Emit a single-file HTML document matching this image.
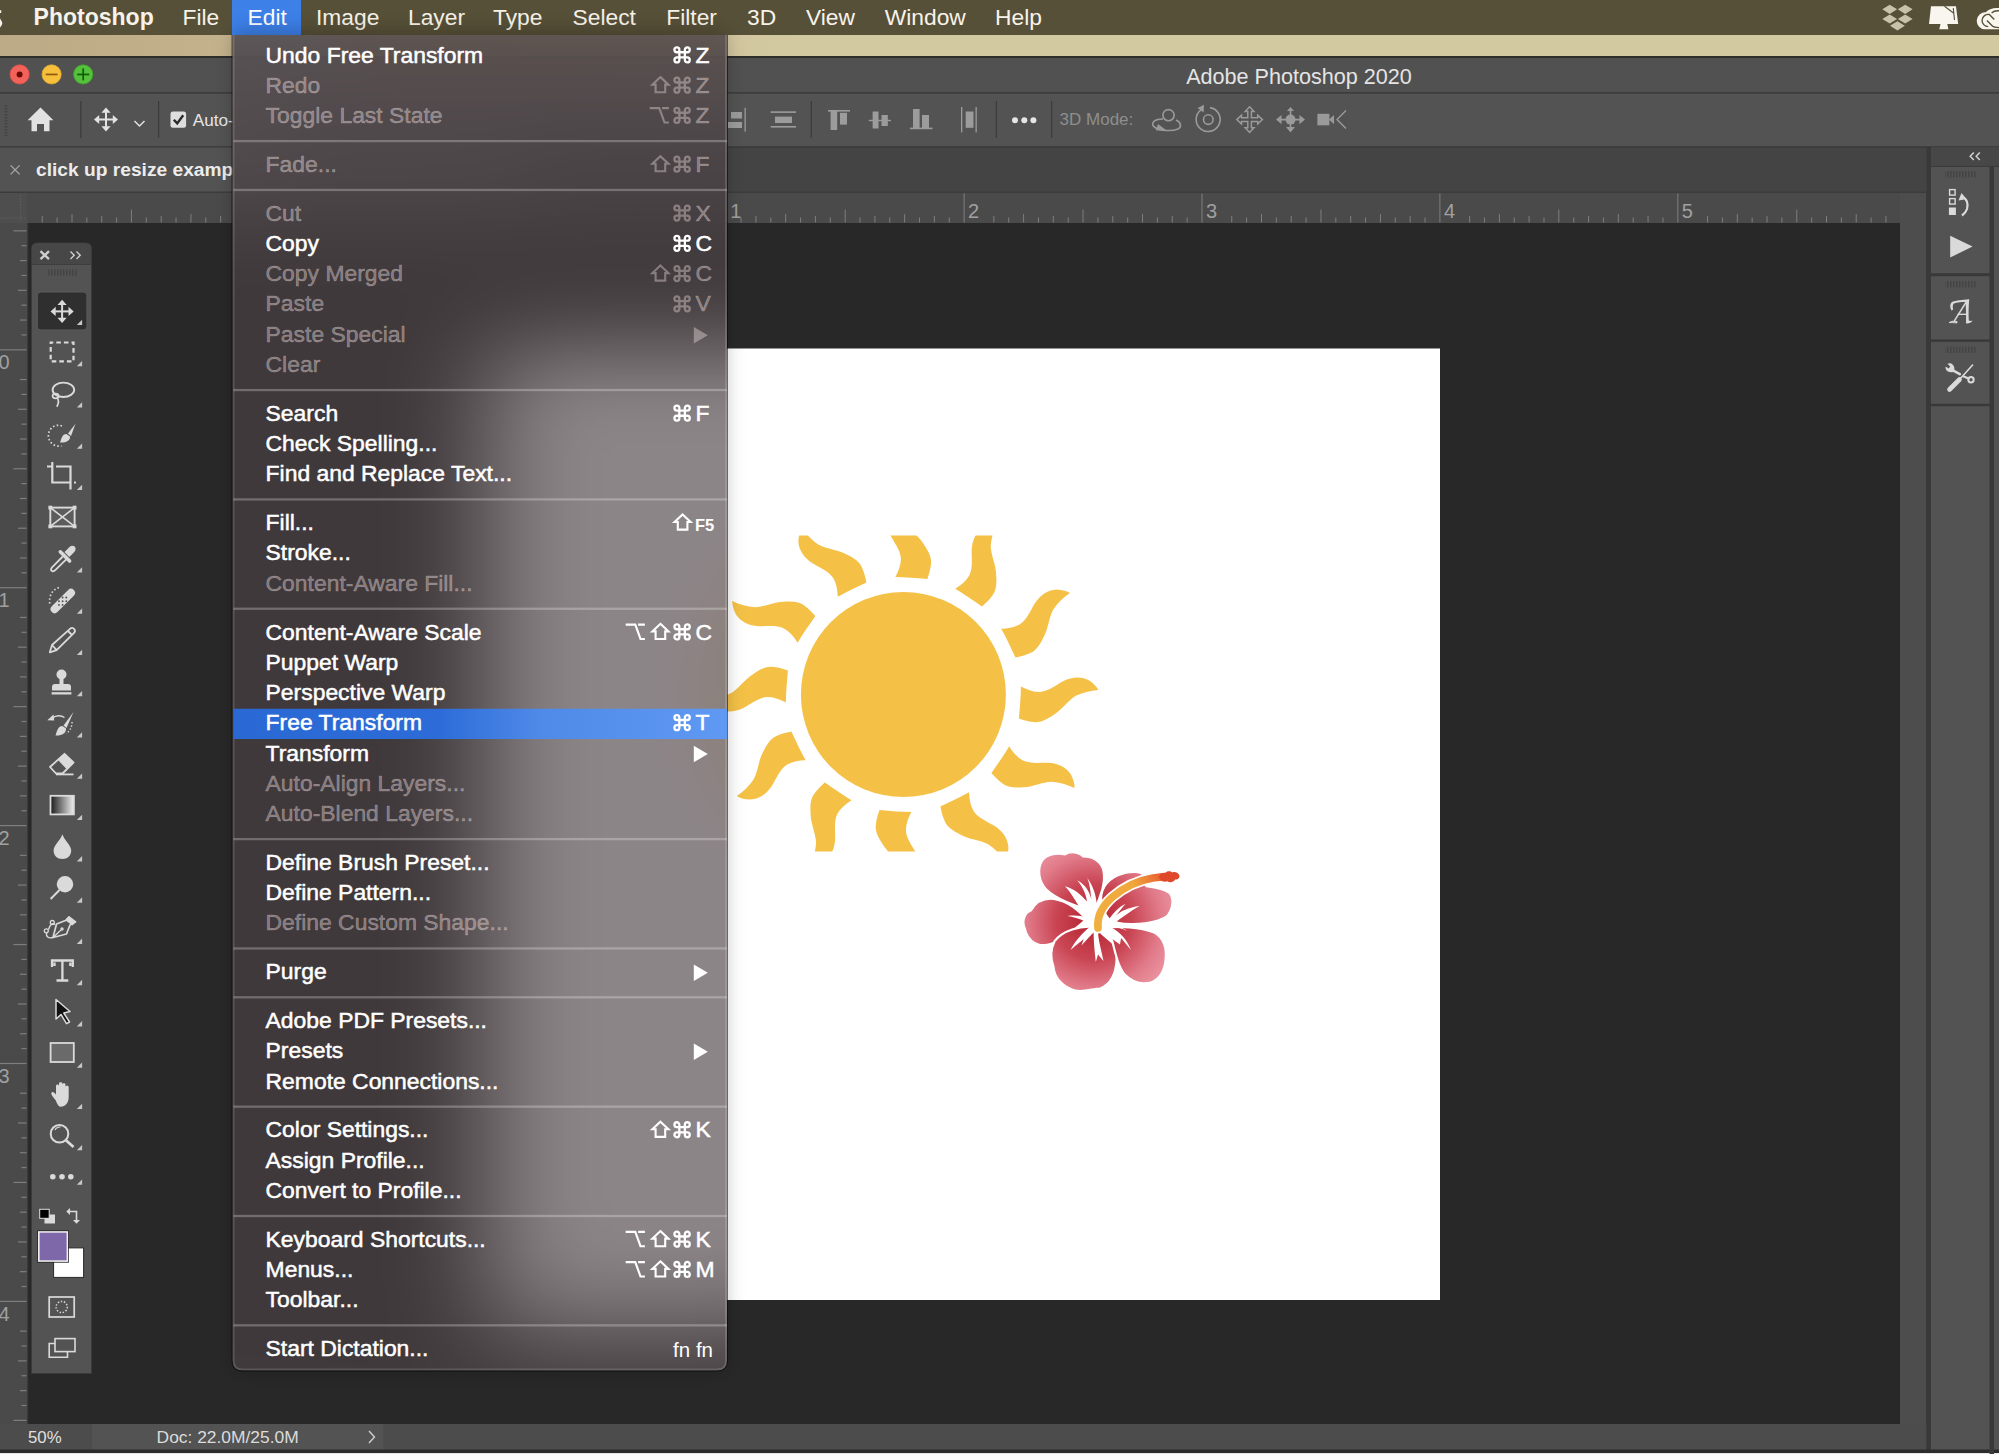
<!DOCTYPE html><html><head><meta charset="utf-8"><style>html,body{margin:0;padding:0;}body{width:1999px;height:1454px;overflow:hidden;position:relative;background:#282828;font-family:"Liberation Sans",sans-serif}svg{position:absolute;left:0;top:0}text{font-family:"Liberation Sans",sans-serif}</style></head><body>
<svg width="1999" height="1454" viewBox="0 0 1999 1454"><defs><linearGradient id="tan" gradientUnits="userSpaceOnUse" x1="0" y1="0" x2="800" y2="0"><stop offset="0" stop-color="#bca985"/><stop offset="0.35" stop-color="#c5b48e"/><stop offset="1" stop-color="#d3c9a1"/></linearGradient><pattern id="vdots" x="0" y="0" width="1" height="3" patternUnits="userSpaceOnUse"><rect x="0" y="0" width="1" height="1.5" fill="#5e5e5e"/></pattern><pattern id="hdots" x="0" y="0" width="3" height="1" patternUnits="userSpaceOnUse"><rect x="0" y="0" width="1.5" height="1" fill="#5e5e5e"/></pattern><radialGradient id="petal" gradientUnits="userSpaceOnUse" cx="760" cy="740" r="760"><stop offset="0" stop-color="#b3222f"/><stop offset="0.45" stop-color="#c94452"/><stop offset="0.8" stop-color="#e17b8a"/><stop offset="1" stop-color="#ea909e"/></radialGradient><linearGradient id="stamen" gradientUnits="userSpaceOnUse" x1="800" y1="780" x2="1540" y2="320"><stop offset="0" stop-color="#f0b040"/><stop offset="0.55" stop-color="#f0a63c"/><stop offset="0.8" stop-color="#e86a34"/><stop offset="1" stop-color="#e0432c"/></linearGradient><linearGradient id="hilite" gradientUnits="userSpaceOnUse" x1="232" y1="0" x2="727" y2="0"><stop offset="0" stop-color="#2a68d4"/><stop offset="0.42" stop-color="#2d6cd8"/><stop offset="0.62" stop-color="#4f8ae8"/><stop offset="1" stop-color="#5f99f3"/></linearGradient><pattern id="vgrip" x="0" y="0" width="3" height="3" patternUnits="userSpaceOnUse"><rect x="0" y="0" width="3" height="1.5" fill="#444"/></pattern><pattern id="hgrip" x="0" y="0" width="3" height="6.2" patternUnits="userSpaceOnUse"><rect x="0" y="0" width="1.5" height="6.2" fill="#444"/></pattern><linearGradient id="gtool" x1="0" y1="0" x2="1" y2="0"><stop offset="0" stop-color="#1a1a1a"/><stop offset="1" stop-color="#f0f0f0"/></linearGradient><filter id="mblur" filterUnits="userSpaceOnUse" x="0" y="0" width="1999" height="1454" color-interpolation-filters="sRGB"><feGaussianBlur stdDeviation="52 44" edgeMode="duplicate"/></filter><clipPath id="menuclip"><path d="M 232.5 35 H 727 V 1360.5 Q 727 1370.5 717 1370.5 H 242.5 Q 232.5 1370.5 232.5 1360.5 Z"/></clipPath></defs><g id="scene"><rect x="0" y="0" width="1999" height="1454" fill="#282828"/><rect x="0" y="0" width="1999" height="35" fill="#575038"/><rect x="0" y="35" width="1999" height="22" fill="url(#tan)"/><rect x="0" y="56" width="1999" height="2" fill="#2e2d29"/><rect x="0" y="58" width="1999" height="35" fill="#515151"/><rect x="0" y="92" width="1999" height="1.5" fill="#3d3d3d"/><rect x="0" y="93.5" width="1999" height="53" fill="#535353"/><rect x="0" y="146" width="1999" height="1.5" fill="#3f3f3f"/><rect x="0" y="147.5" width="1927" height="45" fill="#444444"/><rect x="0" y="147.5" width="260" height="45" fill="#535353"/><rect x="0" y="191.5" width="1927" height="1.5" fill="#3c3c3c"/><rect x="0" y="193" width="1900" height="30" fill="#4a4a4a"/><rect x="0" y="223" width="27" height="1201" fill="#4a4a4a"/><rect x="27" y="223" width="1.5" height="1201" fill="#3a3a3a"/><rect x="28.5" y="223" width="1871.5" height="1201" fill="#282828"/><rect x="1900" y="193" width="26.5" height="1231" fill="#4d4d4d"/><rect x="1926.5" y="147.5" width="4.5" height="1306" fill="#393939"/><rect x="1931" y="147.5" width="68" height="1306" fill="#535353"/><rect x="0" y="1424" width="1926.5" height="26" fill="#4c4c4c"/><rect x="92" y="1424" width="291" height="26" fill="#535353"/><rect x="0" y="1449.5" width="1999" height="3.5" fill="#2d2d2d"/><rect x="0" y="1453" width="1999" height="1" fill="#e8e8e8"/><rect x="489" y="348.5" width="951" height="951.5" fill="#ffffff"/><rect x="41.74" y="216.00" width="1" height="6.5" fill="#7e7e7e"/><rect x="56.61" y="217.50" width="1" height="5" fill="#7e7e7e"/><rect x="71.48" y="214.00" width="1" height="8.5" fill="#7e7e7e"/><rect x="86.34" y="217.50" width="1" height="5" fill="#7e7e7e"/><rect x="101.21" y="216.00" width="1" height="6.5" fill="#7e7e7e"/><rect x="116.08" y="217.50" width="1" height="5" fill="#7e7e7e"/><rect x="130.95" y="209.50" width="1" height="13" fill="#7e7e7e"/><rect x="145.82" y="217.50" width="1" height="5" fill="#7e7e7e"/><rect x="160.69" y="216.00" width="1" height="6.5" fill="#7e7e7e"/><rect x="175.56" y="217.50" width="1" height="5" fill="#7e7e7e"/><rect x="190.43" y="214.00" width="1" height="8.5" fill="#7e7e7e"/><rect x="205.29" y="217.50" width="1" height="5" fill="#7e7e7e"/><rect x="220.16" y="216.00" width="1" height="6.5" fill="#7e7e7e"/><rect x="235.03" y="217.50" width="1" height="5" fill="#7e7e7e"/><rect x="249.90" y="193.50" width="1" height="29" fill="#7e7e7e"/><rect x="264.77" y="217.50" width="1" height="5" fill="#7e7e7e"/><rect x="279.64" y="216.00" width="1" height="6.5" fill="#7e7e7e"/><rect x="294.51" y="217.50" width="1" height="5" fill="#7e7e7e"/><rect x="309.38" y="214.00" width="1" height="8.5" fill="#7e7e7e"/><rect x="324.24" y="217.50" width="1" height="5" fill="#7e7e7e"/><rect x="339.11" y="216.00" width="1" height="6.5" fill="#7e7e7e"/><rect x="353.98" y="217.50" width="1" height="5" fill="#7e7e7e"/><rect x="368.85" y="209.50" width="1" height="13" fill="#7e7e7e"/><rect x="383.72" y="217.50" width="1" height="5" fill="#7e7e7e"/><rect x="398.59" y="216.00" width="1" height="6.5" fill="#7e7e7e"/><rect x="413.46" y="217.50" width="1" height="5" fill="#7e7e7e"/><rect x="428.32" y="214.00" width="1" height="8.5" fill="#7e7e7e"/><rect x="443.19" y="217.50" width="1" height="5" fill="#7e7e7e"/><rect x="458.06" y="216.00" width="1" height="6.5" fill="#7e7e7e"/><rect x="472.93" y="217.50" width="1" height="5" fill="#7e7e7e"/><rect x="487.80" y="193.50" width="1" height="29" fill="#7e7e7e"/><text x="492.3" y="218.3" font-size="20" fill="#a0a0a0" font-weight="normal" text-anchor="start" >0</text><rect x="517.54" y="216.00" width="1" height="6.5" fill="#7e7e7e"/><rect x="532.41" y="217.50" width="1" height="5" fill="#7e7e7e"/><rect x="547.27" y="214.00" width="1" height="8.5" fill="#7e7e7e"/><rect x="562.14" y="217.50" width="1" height="5" fill="#7e7e7e"/><rect x="577.01" y="216.00" width="1" height="6.5" fill="#7e7e7e"/><rect x="591.88" y="217.50" width="1" height="5" fill="#7e7e7e"/><rect x="606.75" y="209.50" width="1" height="13" fill="#7e7e7e"/><rect x="621.62" y="217.50" width="1" height="5" fill="#7e7e7e"/><rect x="636.49" y="216.00" width="1" height="6.5" fill="#7e7e7e"/><rect x="651.36" y="217.50" width="1" height="5" fill="#7e7e7e"/><rect x="666.23" y="214.00" width="1" height="8.5" fill="#7e7e7e"/><rect x="681.09" y="217.50" width="1" height="5" fill="#7e7e7e"/><rect x="695.96" y="216.00" width="1" height="6.5" fill="#7e7e7e"/><rect x="710.83" y="217.50" width="1" height="5" fill="#7e7e7e"/><rect x="725.70" y="193.50" width="1" height="29" fill="#7e7e7e"/><text x="730.2" y="218.3" font-size="20" fill="#a0a0a0" font-weight="normal" text-anchor="start" >1</text><rect x="740.57" y="217.50" width="1" height="5" fill="#7e7e7e"/><rect x="755.44" y="216.00" width="1" height="6.5" fill="#7e7e7e"/><rect x="770.31" y="217.50" width="1" height="5" fill="#7e7e7e"/><rect x="785.17" y="214.00" width="1" height="8.5" fill="#7e7e7e"/><rect x="800.04" y="217.50" width="1" height="5" fill="#7e7e7e"/><rect x="814.91" y="216.00" width="1" height="6.5" fill="#7e7e7e"/><rect x="829.78" y="217.50" width="1" height="5" fill="#7e7e7e"/><rect x="844.65" y="209.50" width="1" height="13" fill="#7e7e7e"/><rect x="859.52" y="217.50" width="1" height="5" fill="#7e7e7e"/><rect x="874.39" y="216.00" width="1" height="6.5" fill="#7e7e7e"/><rect x="889.26" y="217.50" width="1" height="5" fill="#7e7e7e"/><rect x="904.12" y="214.00" width="1" height="8.5" fill="#7e7e7e"/><rect x="918.99" y="217.50" width="1" height="5" fill="#7e7e7e"/><rect x="933.86" y="216.00" width="1" height="6.5" fill="#7e7e7e"/><rect x="948.73" y="217.50" width="1" height="5" fill="#7e7e7e"/><rect x="963.60" y="193.50" width="1" height="29" fill="#7e7e7e"/><text x="968.1" y="218.3" font-size="20" fill="#a0a0a0" font-weight="normal" text-anchor="start" >2</text><rect x="993.34" y="216.00" width="1" height="6.5" fill="#7e7e7e"/><rect x="1008.21" y="217.50" width="1" height="5" fill="#7e7e7e"/><rect x="1023.08" y="214.00" width="1" height="8.5" fill="#7e7e7e"/><rect x="1037.94" y="217.50" width="1" height="5" fill="#7e7e7e"/><rect x="1052.81" y="216.00" width="1" height="6.5" fill="#7e7e7e"/><rect x="1067.68" y="217.50" width="1" height="5" fill="#7e7e7e"/><rect x="1082.55" y="209.50" width="1" height="13" fill="#7e7e7e"/><rect x="1097.42" y="217.50" width="1" height="5" fill="#7e7e7e"/><rect x="1112.29" y="216.00" width="1" height="6.5" fill="#7e7e7e"/><rect x="1127.16" y="217.50" width="1" height="5" fill="#7e7e7e"/><rect x="1142.03" y="214.00" width="1" height="8.5" fill="#7e7e7e"/><rect x="1156.89" y="217.50" width="1" height="5" fill="#7e7e7e"/><rect x="1171.76" y="216.00" width="1" height="6.5" fill="#7e7e7e"/><rect x="1186.63" y="217.50" width="1" height="5" fill="#7e7e7e"/><rect x="1201.50" y="193.50" width="1" height="29" fill="#7e7e7e"/><text x="1206.0" y="218.3" font-size="20" fill="#a0a0a0" font-weight="normal" text-anchor="start" >3</text><rect x="1231.24" y="216.00" width="1" height="6.5" fill="#7e7e7e"/><rect x="1246.11" y="217.50" width="1" height="5" fill="#7e7e7e"/><rect x="1260.98" y="214.00" width="1" height="8.5" fill="#7e7e7e"/><rect x="1275.84" y="217.50" width="1" height="5" fill="#7e7e7e"/><rect x="1290.71" y="216.00" width="1" height="6.5" fill="#7e7e7e"/><rect x="1305.58" y="217.50" width="1" height="5" fill="#7e7e7e"/><rect x="1320.45" y="209.50" width="1" height="13" fill="#7e7e7e"/><rect x="1335.32" y="217.50" width="1" height="5" fill="#7e7e7e"/><rect x="1350.19" y="216.00" width="1" height="6.5" fill="#7e7e7e"/><rect x="1365.06" y="217.50" width="1" height="5" fill="#7e7e7e"/><rect x="1379.92" y="214.00" width="1" height="8.5" fill="#7e7e7e"/><rect x="1394.79" y="217.50" width="1" height="5" fill="#7e7e7e"/><rect x="1409.66" y="216.00" width="1" height="6.5" fill="#7e7e7e"/><rect x="1424.53" y="217.50" width="1" height="5" fill="#7e7e7e"/><rect x="1439.40" y="193.50" width="1" height="29" fill="#7e7e7e"/><text x="1443.9" y="218.3" font-size="20" fill="#a0a0a0" font-weight="normal" text-anchor="start" >4</text><rect x="1469.14" y="216.00" width="1" height="6.5" fill="#7e7e7e"/><rect x="1484.01" y="217.50" width="1" height="5" fill="#7e7e7e"/><rect x="1498.88" y="214.00" width="1" height="8.5" fill="#7e7e7e"/><rect x="1513.74" y="217.50" width="1" height="5" fill="#7e7e7e"/><rect x="1528.61" y="216.00" width="1" height="6.5" fill="#7e7e7e"/><rect x="1543.48" y="217.50" width="1" height="5" fill="#7e7e7e"/><rect x="1558.35" y="209.50" width="1" height="13" fill="#7e7e7e"/><rect x="1573.22" y="217.50" width="1" height="5" fill="#7e7e7e"/><rect x="1588.09" y="216.00" width="1" height="6.5" fill="#7e7e7e"/><rect x="1602.96" y="217.50" width="1" height="5" fill="#7e7e7e"/><rect x="1617.83" y="214.00" width="1" height="8.5" fill="#7e7e7e"/><rect x="1632.69" y="217.50" width="1" height="5" fill="#7e7e7e"/><rect x="1647.56" y="216.00" width="1" height="6.5" fill="#7e7e7e"/><rect x="1662.43" y="217.50" width="1" height="5" fill="#7e7e7e"/><rect x="1677.30" y="193.50" width="1" height="29" fill="#7e7e7e"/><text x="1681.8" y="218.3" font-size="20" fill="#a0a0a0" font-weight="normal" text-anchor="start" >5</text><rect x="1707.04" y="216.00" width="1" height="6.5" fill="#7e7e7e"/><rect x="1721.91" y="217.50" width="1" height="5" fill="#7e7e7e"/><rect x="1736.78" y="214.00" width="1" height="8.5" fill="#7e7e7e"/><rect x="1751.64" y="217.50" width="1" height="5" fill="#7e7e7e"/><rect x="1766.51" y="216.00" width="1" height="6.5" fill="#7e7e7e"/><rect x="1781.38" y="217.50" width="1" height="5" fill="#7e7e7e"/><rect x="1796.25" y="209.50" width="1" height="13" fill="#7e7e7e"/><rect x="1811.12" y="217.50" width="1" height="5" fill="#7e7e7e"/><rect x="1825.99" y="216.00" width="1" height="6.5" fill="#7e7e7e"/><rect x="1840.86" y="217.50" width="1" height="5" fill="#7e7e7e"/><rect x="1855.72" y="214.00" width="1" height="8.5" fill="#7e7e7e"/><rect x="1870.59" y="217.50" width="1" height="5" fill="#7e7e7e"/><rect x="1885.46" y="216.00" width="1" height="6.5" fill="#7e7e7e"/><rect x="0" y="193" width="27" height="30" fill="#4e4e4e"/><rect x="20" y="194" width="1" height="28" fill="url(#vdots)"/><rect x="0" y="217.5" width="26" height="1" fill="url(#hdots)"/><rect x="13.50" y="230.25" width="13" height="1.2" fill="#7e7e7e"/><rect x="21.50" y="245.12" width="5" height="1.2" fill="#7e7e7e"/><rect x="20.00" y="259.99" width="6.5" height="1.2" fill="#7e7e7e"/><rect x="21.50" y="274.86" width="5" height="1.2" fill="#7e7e7e"/><rect x="18.00" y="289.72" width="8.5" height="1.2" fill="#7e7e7e"/><rect x="21.50" y="304.59" width="5" height="1.2" fill="#7e7e7e"/><rect x="20.00" y="319.46" width="6.5" height="1.2" fill="#7e7e7e"/><rect x="21.50" y="334.33" width="5" height="1.2" fill="#7e7e7e"/><rect x="-0.50" y="349.20" width="27" height="1.2" fill="#7e7e7e"/><text x="-1.5" y="369.1" font-size="20" fill="#a0a0a0" font-weight="normal" text-anchor="start" >0</text><rect x="20.00" y="378.94" width="6.5" height="1.2" fill="#7e7e7e"/><rect x="21.50" y="393.81" width="5" height="1.2" fill="#7e7e7e"/><rect x="18.00" y="408.68" width="8.5" height="1.2" fill="#7e7e7e"/><rect x="21.50" y="423.54" width="5" height="1.2" fill="#7e7e7e"/><rect x="20.00" y="438.41" width="6.5" height="1.2" fill="#7e7e7e"/><rect x="21.50" y="453.28" width="5" height="1.2" fill="#7e7e7e"/><rect x="13.50" y="468.15" width="13" height="1.2" fill="#7e7e7e"/><rect x="21.50" y="483.02" width="5" height="1.2" fill="#7e7e7e"/><rect x="20.00" y="497.89" width="6.5" height="1.2" fill="#7e7e7e"/><rect x="21.50" y="512.76" width="5" height="1.2" fill="#7e7e7e"/><rect x="18.00" y="527.62" width="8.5" height="1.2" fill="#7e7e7e"/><rect x="21.50" y="542.49" width="5" height="1.2" fill="#7e7e7e"/><rect x="20.00" y="557.36" width="6.5" height="1.2" fill="#7e7e7e"/><rect x="21.50" y="572.23" width="5" height="1.2" fill="#7e7e7e"/><rect x="-0.50" y="587.10" width="27" height="1.2" fill="#7e7e7e"/><text x="-1.5" y="607.0" font-size="20" fill="#a0a0a0" font-weight="normal" text-anchor="start" >1</text><rect x="20.00" y="616.84" width="6.5" height="1.2" fill="#7e7e7e"/><rect x="21.50" y="631.71" width="5" height="1.2" fill="#7e7e7e"/><rect x="18.00" y="646.57" width="8.5" height="1.2" fill="#7e7e7e"/><rect x="21.50" y="661.44" width="5" height="1.2" fill="#7e7e7e"/><rect x="20.00" y="676.31" width="6.5" height="1.2" fill="#7e7e7e"/><rect x="21.50" y="691.18" width="5" height="1.2" fill="#7e7e7e"/><rect x="13.50" y="706.05" width="13" height="1.2" fill="#7e7e7e"/><rect x="21.50" y="720.92" width="5" height="1.2" fill="#7e7e7e"/><rect x="20.00" y="735.79" width="6.5" height="1.2" fill="#7e7e7e"/><rect x="21.50" y="750.66" width="5" height="1.2" fill="#7e7e7e"/><rect x="18.00" y="765.52" width="8.5" height="1.2" fill="#7e7e7e"/><rect x="21.50" y="780.39" width="5" height="1.2" fill="#7e7e7e"/><rect x="20.00" y="795.26" width="6.5" height="1.2" fill="#7e7e7e"/><rect x="21.50" y="810.13" width="5" height="1.2" fill="#7e7e7e"/><rect x="-0.50" y="825.00" width="27" height="1.2" fill="#7e7e7e"/><text x="-1.5" y="844.9" font-size="20" fill="#a0a0a0" font-weight="normal" text-anchor="start" >2</text><rect x="20.00" y="854.74" width="6.5" height="1.2" fill="#7e7e7e"/><rect x="21.50" y="869.61" width="5" height="1.2" fill="#7e7e7e"/><rect x="18.00" y="884.48" width="8.5" height="1.2" fill="#7e7e7e"/><rect x="21.50" y="899.34" width="5" height="1.2" fill="#7e7e7e"/><rect x="20.00" y="914.21" width="6.5" height="1.2" fill="#7e7e7e"/><rect x="21.50" y="929.08" width="5" height="1.2" fill="#7e7e7e"/><rect x="13.50" y="943.95" width="13" height="1.2" fill="#7e7e7e"/><rect x="21.50" y="958.82" width="5" height="1.2" fill="#7e7e7e"/><rect x="20.00" y="973.69" width="6.5" height="1.2" fill="#7e7e7e"/><rect x="21.50" y="988.56" width="5" height="1.2" fill="#7e7e7e"/><rect x="18.00" y="1003.43" width="8.5" height="1.2" fill="#7e7e7e"/><rect x="21.50" y="1018.29" width="5" height="1.2" fill="#7e7e7e"/><rect x="20.00" y="1033.16" width="6.5" height="1.2" fill="#7e7e7e"/><rect x="21.50" y="1048.03" width="5" height="1.2" fill="#7e7e7e"/><rect x="-0.50" y="1062.90" width="27" height="1.2" fill="#7e7e7e"/><text x="-1.5" y="1082.8" font-size="20" fill="#a0a0a0" font-weight="normal" text-anchor="start" >3</text><rect x="20.00" y="1092.64" width="6.5" height="1.2" fill="#7e7e7e"/><rect x="21.50" y="1107.51" width="5" height="1.2" fill="#7e7e7e"/><rect x="18.00" y="1122.38" width="8.5" height="1.2" fill="#7e7e7e"/><rect x="21.50" y="1137.24" width="5" height="1.2" fill="#7e7e7e"/><rect x="20.00" y="1152.11" width="6.5" height="1.2" fill="#7e7e7e"/><rect x="21.50" y="1166.98" width="5" height="1.2" fill="#7e7e7e"/><rect x="13.50" y="1181.85" width="13" height="1.2" fill="#7e7e7e"/><rect x="21.50" y="1196.72" width="5" height="1.2" fill="#7e7e7e"/><rect x="20.00" y="1211.59" width="6.5" height="1.2" fill="#7e7e7e"/><rect x="21.50" y="1226.46" width="5" height="1.2" fill="#7e7e7e"/><rect x="18.00" y="1241.33" width="8.5" height="1.2" fill="#7e7e7e"/><rect x="21.50" y="1256.19" width="5" height="1.2" fill="#7e7e7e"/><rect x="20.00" y="1271.06" width="6.5" height="1.2" fill="#7e7e7e"/><rect x="21.50" y="1285.93" width="5" height="1.2" fill="#7e7e7e"/><rect x="-0.50" y="1300.80" width="27" height="1.2" fill="#7e7e7e"/><text x="-1.5" y="1320.7" font-size="20" fill="#a0a0a0" font-weight="normal" text-anchor="start" >4</text><rect x="20.00" y="1330.54" width="6.5" height="1.2" fill="#7e7e7e"/><rect x="21.50" y="1345.41" width="5" height="1.2" fill="#7e7e7e"/><rect x="18.00" y="1360.28" width="8.5" height="1.2" fill="#7e7e7e"/><rect x="21.50" y="1375.14" width="5" height="1.2" fill="#7e7e7e"/><rect x="20.00" y="1390.01" width="6.5" height="1.2" fill="#7e7e7e"/><rect x="21.50" y="1404.88" width="5" height="1.2" fill="#7e7e7e"/><rect x="13.50" y="1419.75" width="13" height="1.2" fill="#7e7e7e"/><clipPath id="sunclip"><rect x="600" y="535.5" width="600" height="316"/></clipPath><g clip-path="url(#sunclip)" fill="#f4c146"><circle cx="903.4" cy="694.5" r="102.5"/><path transform="translate(903.4 694.5) rotate(0)" d="M -8 -117.5 C -4.5 -124 -2.5 -130 -2.5 -136 C -3 -145 -10 -153 -13.5 -160 C -17.5 -168 -18.5 -177 -14.5 -185 C -11 -190.5 -7.5 -193.5 -4.5 -195 C -4 -187 -2 -179 1.5 -172 C 6.5 -164 16 -158 20.5 -150 C 26 -142 28.5 -136 27.5 -130 C 27 -124 25 -119 24 -115.5 C 12 -116.5 2 -117.5 -8 -117.5 Z"/><path transform="translate(903.4 694.5) rotate(30)" d="M -8 -117.5 C -4.5 -124 -2.5 -130 -2.5 -136 C -3 -145 -10 -153 -13.5 -160 C -17.5 -168 -18.5 -177 -14.5 -185 C -11 -190.5 -7.5 -193.5 -4.5 -195 C -4 -187 -2 -179 1.5 -172 C 6.5 -164 16 -158 20.5 -150 C 26 -142 28.5 -136 27.5 -130 C 27 -124 25 -119 24 -115.5 C 12 -116.5 2 -117.5 -8 -117.5 Z"/><path transform="translate(903.4 694.5) rotate(60)" d="M -8 -117.5 C -4.5 -124 -2.5 -130 -2.5 -136 C -3 -145 -10 -153 -13.5 -160 C -17.5 -168 -18.5 -177 -14.5 -185 C -11 -190.5 -7.5 -193.5 -4.5 -195 C -4 -187 -2 -179 1.5 -172 C 6.5 -164 16 -158 20.5 -150 C 26 -142 28.5 -136 27.5 -130 C 27 -124 25 -119 24 -115.5 C 12 -116.5 2 -117.5 -8 -117.5 Z"/><path transform="translate(903.4 694.5) rotate(90)" d="M -8 -117.5 C -4.5 -124 -2.5 -130 -2.5 -136 C -3 -145 -10 -153 -13.5 -160 C -17.5 -168 -18.5 -177 -14.5 -185 C -11 -190.5 -7.5 -193.5 -4.5 -195 C -4 -187 -2 -179 1.5 -172 C 6.5 -164 16 -158 20.5 -150 C 26 -142 28.5 -136 27.5 -130 C 27 -124 25 -119 24 -115.5 C 12 -116.5 2 -117.5 -8 -117.5 Z"/><path transform="translate(903.4 694.5) rotate(120)" d="M -8 -117.5 C -4.5 -124 -2.5 -130 -2.5 -136 C -3 -145 -10 -153 -13.5 -160 C -17.5 -168 -18.5 -177 -14.5 -185 C -11 -190.5 -7.5 -193.5 -4.5 -195 C -4 -187 -2 -179 1.5 -172 C 6.5 -164 16 -158 20.5 -150 C 26 -142 28.5 -136 27.5 -130 C 27 -124 25 -119 24 -115.5 C 12 -116.5 2 -117.5 -8 -117.5 Z"/><path transform="translate(903.4 694.5) rotate(150)" d="M -8 -117.5 C -4.5 -124 -2.5 -130 -2.5 -136 C -3 -145 -10 -153 -13.5 -160 C -17.5 -168 -18.5 -177 -14.5 -185 C -11 -190.5 -7.5 -193.5 -4.5 -195 C -4 -187 -2 -179 1.5 -172 C 6.5 -164 16 -158 20.5 -150 C 26 -142 28.5 -136 27.5 -130 C 27 -124 25 -119 24 -115.5 C 12 -116.5 2 -117.5 -8 -117.5 Z"/><path transform="translate(903.4 694.5) rotate(180)" d="M -8 -117.5 C -4.5 -124 -2.5 -130 -2.5 -136 C -3 -145 -10 -153 -13.5 -160 C -17.5 -168 -18.5 -177 -14.5 -185 C -11 -190.5 -7.5 -193.5 -4.5 -195 C -4 -187 -2 -179 1.5 -172 C 6.5 -164 16 -158 20.5 -150 C 26 -142 28.5 -136 27.5 -130 C 27 -124 25 -119 24 -115.5 C 12 -116.5 2 -117.5 -8 -117.5 Z"/><path transform="translate(903.4 694.5) rotate(210)" d="M -8 -117.5 C -4.5 -124 -2.5 -130 -2.5 -136 C -3 -145 -10 -153 -13.5 -160 C -17.5 -168 -18.5 -177 -14.5 -185 C -11 -190.5 -7.5 -193.5 -4.5 -195 C -4 -187 -2 -179 1.5 -172 C 6.5 -164 16 -158 20.5 -150 C 26 -142 28.5 -136 27.5 -130 C 27 -124 25 -119 24 -115.5 C 12 -116.5 2 -117.5 -8 -117.5 Z"/><path transform="translate(903.4 694.5) rotate(240)" d="M -8 -117.5 C -4.5 -124 -2.5 -130 -2.5 -136 C -3 -145 -10 -153 -13.5 -160 C -17.5 -168 -18.5 -177 -14.5 -185 C -11 -190.5 -7.5 -193.5 -4.5 -195 C -4 -187 -2 -179 1.5 -172 C 6.5 -164 16 -158 20.5 -150 C 26 -142 28.5 -136 27.5 -130 C 27 -124 25 -119 24 -115.5 C 12 -116.5 2 -117.5 -8 -117.5 Z"/><path transform="translate(903.4 694.5) rotate(270)" d="M -8 -117.5 C -4.5 -124 -2.5 -130 -2.5 -136 C -3 -145 -10 -153 -13.5 -160 C -17.5 -168 -18.5 -177 -14.5 -185 C -11 -190.5 -7.5 -193.5 -4.5 -195 C -4 -187 -2 -179 1.5 -172 C 6.5 -164 16 -158 20.5 -150 C 26 -142 28.5 -136 27.5 -130 C 27 -124 25 -119 24 -115.5 C 12 -116.5 2 -117.5 -8 -117.5 Z"/><path transform="translate(903.4 694.5) rotate(300)" d="M -8 -117.5 C -4.5 -124 -2.5 -130 -2.5 -136 C -3 -145 -10 -153 -13.5 -160 C -17.5 -168 -18.5 -177 -14.5 -185 C -11 -190.5 -7.5 -193.5 -4.5 -195 C -4 -187 -2 -179 1.5 -172 C 6.5 -164 16 -158 20.5 -150 C 26 -142 28.5 -136 27.5 -130 C 27 -124 25 -119 24 -115.5 C 12 -116.5 2 -117.5 -8 -117.5 Z"/><path transform="translate(903.4 694.5) rotate(330)" d="M -8 -117.5 C -4.5 -124 -2.5 -130 -2.5 -136 C -3 -145 -10 -153 -13.5 -160 C -17.5 -168 -18.5 -177 -14.5 -185 C -11 -190.5 -7.5 -193.5 -4.5 -195 C -4 -187 -2 -179 1.5 -172 C 6.5 -164 16 -158 20.5 -150 C 26 -142 28.5 -136 27.5 -130 C 27 -124 25 -119 24 -115.5 C 12 -116.5 2 -117.5 -8 -117.5 Z"/></g><g transform="translate(1010 840) scale(0.11)"><g fill="url(#petal)" stroke="#fff" stroke-width="20" stroke-linejoin="round"><path d="M 720 640 C 600 600 420 540 330 450 C 255 375 250 260 290 190 C 330 130 420 115 500 130 C 545 100 625 105 665 150 C 745 150 830 185 850 280 C 870 380 830 520 760 640 Z"/><path d="M 700 720 C 620 640 540 560 400 535 C 300 525 230 570 190 640 C 130 660 105 740 135 805 C 150 890 220 965 320 955 C 420 945 520 870 600 800 Z"/><path d="M 760 790 C 640 780 480 820 405 920 C 370 990 370 1080 395 1150 C 400 1250 480 1340 600 1370 C 680 1385 760 1350 820 1350 C 920 1310 965 1200 970 1080 C 975 960 930 860 800 790 Z"/><path d="M 860 800 C 1000 780 1180 790 1310 840 C 1400 890 1425 990 1415 1080 C 1410 1180 1360 1270 1280 1295 C 1200 1315 1110 1290 1040 1220 C 985 1150 960 1040 930 920 Z"/><path d="M 900 720 C 830 640 800 520 860 420 C 920 330 1030 290 1130 290 C 1180 290 1210 305 1215 325 L 1240 420 C 1320 430 1400 440 1450 480 C 1490 530 1485 620 1430 690 C 1360 745 1240 760 1120 765 C 1020 768 950 755 900 720 Z"/></g><g fill="#ffffff"><path d="M 500 420 C 580 440 650 500 700 560 C 690 470 640 400 610 365 C 680 400 720 460 740 540 C 730 440 720 380 700 340 C 760 420 790 520 790 620 C 800 700 780 760 770 790 C 700 740 600 700 520 690 C 600 680 650 690 690 700 C 620 600 560 480 500 420 Z"/><path d="M 760 760 C 690 820 600 900 550 1000 C 620 940 650 920 670 900 L 650 960 C 700 900 740 860 760 840 C 760 920 770 1020 780 1110 L 800 1040 L 850 1100 C 830 1000 800 900 800 830 C 850 880 900 920 950 960 L 930 900 L 1000 950 L 1010 890 L 1100 1000 C 1060 900 1000 840 930 800 C 990 790 1050 810 1090 850 C 1040 800 990 780 930 770 C 1000 720 1100 640 1180 600 C 1080 610 1000 650 960 690 L 1050 580 C 990 610 940 660 900 720 Z"/></g><path d="M 800 800 C 790 700 840 600 930 520 C 1020 440 1150 370 1300 345 C 1340 340 1380 335 1400 335" fill="none" stroke="#fff" stroke-width="100" stroke-linecap="round"/><path d="M 800 800 C 790 700 840 600 930 520 C 1020 440 1150 370 1300 345 C 1340 340 1380 335 1400 335" fill="none" stroke="url(#stamen)" stroke-width="70" stroke-linecap="round"/><path d="M 1360 325 C 1365 300 1395 295 1410 300 C 1425 280 1460 280 1475 295 C 1500 285 1535 300 1540 325 C 1545 350 1520 360 1500 360 C 1490 385 1450 390 1430 375 C 1405 385 1370 375 1365 355 C 1350 350 1350 335 1360 325 Z" fill="#e0482c"/></g><text x="33.6" y="25.4" font-size="23.0" fill="#f7f3ea" font-weight="bold" text-anchor="start" >Photoshop</text><text x="182.5" y="25.4" font-size="22.8" fill="#f7f3ea" font-weight="normal" text-anchor="start" >File</text><text x="316" y="25.4" font-size="22.8" fill="#f7f3ea" font-weight="normal" text-anchor="start" >Image</text><text x="408" y="25.4" font-size="22.8" fill="#f7f3ea" font-weight="normal" text-anchor="start" >Layer</text><text x="493" y="25.4" font-size="22.8" fill="#f7f3ea" font-weight="normal" text-anchor="start" >Type</text><text x="572.5" y="25.4" font-size="22.8" fill="#f7f3ea" font-weight="normal" text-anchor="start" >Select</text><text x="666.3" y="25.4" font-size="22.8" fill="#f7f3ea" font-weight="normal" text-anchor="start" >Filter</text><text x="747" y="25.4" font-size="22.8" fill="#f7f3ea" font-weight="normal" text-anchor="start" >3D</text><text x="806" y="25.4" font-size="22.8" fill="#f7f3ea" font-weight="normal" text-anchor="start" >View</text><text x="884.7" y="25.4" font-size="22.8" fill="#f7f3ea" font-weight="normal" text-anchor="start" >Window</text><text x="995" y="25.4" font-size="22.8" fill="#f7f3ea" font-weight="normal" text-anchor="start" >Help</text><rect x="232" y="0" width="69" height="35" fill="#3c80e8"/><text x="247.5" y="25.4" font-size="22.8" fill="#ffffff" font-weight="normal" text-anchor="start" >Edit</text><path d="M -6 10 L 1.3 10.3 L 1.2 13 L -6 13 Z M -6 14.5 C -1.5 14.5 0.3 16.5 0.1 18.8 C 1 20 2.3 22 2.3 23.6 C 2 25 1.2 26.5 0 27.5 L -6 27.5 Z" fill="#f7f3ea"/><path d="M 1882.3 9.3 L 1889.7 4.700000000000001 L 1897.1000000000001 9.3 L 1889.7 13.9 Z" fill="#c9c2aa"/><path d="M 1897.8 9.3 L 1905.2 4.700000000000001 L 1912.6000000000001 9.3 L 1905.2 13.9 Z" fill="#c9c2aa"/><path d="M 1882.3 19 L 1889.7 14.4 L 1897.1000000000001 19 L 1889.7 23.6 Z" fill="#c9c2aa"/><path d="M 1897.8 19 L 1905.2 14.4 L 1912.6000000000001 19 L 1905.2 23.6 Z" fill="#c9c2aa"/><path d="M 1890.0 25.8 L 1897.4 21.200000000000003 L 1904.8000000000002 25.8 L 1897.4 30.4 Z" fill="#c9c2aa"/><path d="M 1931 6.2 H 1956 L 1958.2 24 H 1929 Z" fill="#f8f6ee"/><path d="M 1940.5 24 H 1947.3 L 1948.4 29.2 H 1939.3 Z" fill="#f8f6ee"/><path d="M 1944.5 6.2 L 1953.5 13 M 1953.3 8 L 1954.5 20" stroke="#575038" stroke-width="1.1" fill="none"/><path d="M 1984.7 29.3 A 8.5 8.5 0 0 1 1985.8 12.3 C 1988 9.8 1992 8 1997 8 L 2005 8 V 29.3 Z" fill="#f8f6ee"/><path d="M 1988.2 26.6 A 6.1 6.1 0 1 1 1989.3 14.5 L 1994.3 19.5 M 1986.9 20.6 L 1992.4 26.1 C 1994 27.6 1997 27.6 2000 27.6 M 1991.6 12.9 C 1993.6 11 1997 10.5 2000 10.9" fill="none" stroke="#575038" stroke-width="1.35"/><circle cx="19.6" cy="74.4" r="9.6" fill="#f2625b" stroke="#e0504a" stroke-width="0.8"/><circle cx="19.6" cy="74.4" r="3" fill="#6a0c06"/><circle cx="51.6" cy="74.4" r="9.6" fill="#f7c03c" stroke="#e0a830" stroke-width="0.8"/><rect x="45.6" y="73.6" width="12" height="1.7" fill="#91590f"/><circle cx="83.2" cy="74.4" r="9.6" fill="#55c13c" stroke="#3da62a" stroke-width="0.8"/><rect x="77.2" y="73.6" width="12" height="1.7" fill="#0d5e05"/><rect x="82.35" y="68.4" width="1.7" height="12" fill="#0d5e05"/><text x="1299" y="83.8" font-size="21.6" fill="#e4e4e4" font-weight="normal" text-anchor="middle" >Adobe Photoshop 2020</text><rect x="4.5" y="104" width="3" height="32" fill="url(#vgrip)"/><path d="M 40.5 107.5 L 53.4 120.2 H 49.5 V 131.2 H 44 V 124 H 37 V 131.2 H 31.5 V 120.2 H 27.6 Z" fill="#e2e2e2"/><rect x="80.2" y="101" width="1.2" height="37" fill="#3b3b3b"/><rect x="105.0" y="112.2" width="2.0" height="14.6" fill="#e2e2e2"/><rect x="98.7" y="118.5" width="14.6" height="2.0" fill="#e2e2e2"/><path d="M 106 107.5 L 110.6 112.7 H 101.4 Z M 106 131.5 L 110.6 126.3 H 101.4 Z M 94.0 119.5 L 99.2 114.9 V 124.1 Z M 118.0 119.5 L 112.8 114.9 V 124.1 Z" fill="#e2e2e2"/><path d="M 134.5 121 L 139.5 126 L 144.5 121" fill="none" stroke="#e2e2e2" stroke-width="1.5"/><rect x="158" y="101" width="1.2" height="37" fill="#3b3b3b"/><rect x="170.5" y="111.6" width="15.6" height="16.2" rx="2.5" fill="#dedede"/><path d="M 173.8 119.8 L 177.2 123.4 L 183.2 115.2" fill="none" stroke="#2a2a2a" stroke-width="2.4"/><text x="192.7" y="125.5" font-size="17.2" fill="#e6e6e6" font-weight="normal" text-anchor="start" >Auto-Select:</text><g fill="#9c9c9c"><rect x="731" y="112" width="11" height="6.5"/><rect x="728" y="122" width="14" height="6"/><rect x="744.5" y="107.8" width="1.3" height="23.8"/><rect x="770.7" y="111.3" width="25.3" height="1.6"/><rect x="775" y="116.6" width="17" height="6.4"/><rect x="770.7" y="126" width="25.3" height="1.6"/><rect x="828" y="110" width="22" height="1.6"/><rect x="830.6" y="111" width="6.6" height="19"/><rect x="840" y="112.8" width="7" height="11.8"/><rect x="868.8" y="119.8" width="22.2" height="1.4"/><rect x="872.6" y="111.5" width="5.9" height="17"/><rect x="881.5" y="115" width="6.3" height="11"/><rect x="910" y="127.6" width="22.5" height="1.6"/><rect x="913" y="109" width="6.6" height="19"/><rect x="922" y="115" width="7" height="13"/><rect x="961" y="107" width="1.3" height="25.4"/><rect x="975.5" y="107" width="1.3" height="25.4"/><rect x="965.7" y="111.5" width="7.8" height="16.3"/></g><rect x="810.6999999999999" y="101" width="1.2" height="37" fill="#3b3b3b"/><rect x="995.8" y="101" width="1.2" height="37" fill="#3b3b3b"/><rect x="1051.0" y="101" width="1.2" height="37" fill="#3b3b3b"/><circle cx="1015" cy="120.2" r="3" fill="#e6e6e6"/><circle cx="1024.3" cy="120.2" r="3" fill="#e6e6e6"/><circle cx="1033.4" cy="120.2" r="3" fill="#e6e6e6"/><text x="1059.6" y="125.3" font-size="17.0" fill="#8e8e8e" font-weight="normal" text-anchor="start" >3D Mode:</text><circle cx="1168.5" cy="115.2" r="5.6" fill="none" stroke="#9a9a9a" stroke-width="1.6"/><path d="M 1163 119 C 1153 119 1150 124 1155 127.5 C 1160 131 1172 131.5 1178 129 C 1182 127 1181 122 1176 120" fill="none" stroke="#9a9a9a" stroke-width="1.6"/><path d="M 1158 124 L 1166 130 L 1156 130.5 Z" fill="#9a9a9a"/><circle cx="1208.3" cy="119.6" r="4.8" fill="none" stroke="#9a9a9a" stroke-width="1.6"/><path d="M 1201 109.8 A 12 12 0 1 0 1210 107.6" fill="none" stroke="#9a9a9a" stroke-width="1.6"/><path d="M 1197.6 108 L 1204 104.8 L 1203.6 112.6 Z" fill="#9a9a9a"/><path d="M 1249.6 106.8 L 1254 111.5 H 1251.4 V 117.8 H 1257.7 V 115.2 L 1262.4 119.6 L 1257.7 124 V 121.4 H 1251.4 V 127.7 H 1254 L 1249.6 132.4 L 1245.2 127.7 H 1247.8 V 121.4 H 1241.5 V 124 L 1236.8 119.6 L 1241.5 115.2 V 117.8 H 1247.8 V 111.5 H 1245.2 Z" fill="none" stroke="#9a9a9a" stroke-width="1.5"/><circle cx="1290.5" cy="119.6" r="5" fill="#9a9a9a"/><path d="M 1290.5 107 L 1294 111 H 1287 Z M 1290.5 132.4 L 1295 127 H 1286 Z M 1276 119.6 L 1281.5 115 V 124.2 Z M 1305 119.6 L 1299.5 115 V 124.2 Z" fill="#9a9a9a"/><path d="M 1290.5 110 V 127 M 1280 119.6 H 1301" stroke="#9a9a9a" stroke-width="1.6"/><rect x="1317.4" y="113.8" width="12" height="11.5" fill="#9a9a9a"/><path d="M 1329 119.6 L 1334 115 V 124.2 Z" fill="#9a9a9a"/><path d="M 1346 110.5 L 1337 119.6 L 1346 128.5" fill="none" stroke="#9a9a9a" stroke-width="1.4"/><path d="M 10.6 165.4 L 19.6 174.4 M 19.6 165.4 L 10.6 174.4" stroke="#a8a8a8" stroke-width="1.3"/><text x="36" y="175.8" font-size="19.2" fill="#ececec" font-weight="bold" text-anchor="start" >click up resize example.psd @ 50% (Layer 1, RGB/8)</text><text x="28" y="1442.6" font-size="16.8" fill="#e0e0e0" font-weight="normal" text-anchor="start" >50%</text><text x="156.6" y="1442.6" font-size="17.4" fill="#dcdcdc" font-weight="normal" text-anchor="start" >Doc: 22.0M/25.0M</text><path d="M 369 1431 L 374.5 1437 L 369 1443" fill="none" stroke="#d0d0d0" stroke-width="1.4"/><path d="M 31.4 1373.5 V 249 Q 31.4 243 37.4 243 H 85.6 Q 91.6 243 91.6 249 V 1373.5 Z" fill="#535353" stroke="#3a3a3a" stroke-width="1"/><path d="M 31.9 264 V 249 Q 31.9 243.5 37.4 243.5 H 85.6 Q 91.1 243.5 91.1 249 V 264 Z" fill="#474747"/><rect x="31.9" y="264" width="59.2" height="1" fill="#3e3e3e"/><path d="M 40.5 251.2 L 49 259.2 M 49 251.2 L 40.5 259.2" stroke="#cfcfcf" stroke-width="2.4"/><path d="M 70.5 251.5 L 74.2 255.2 L 70.5 258.9 M 76.5 251.5 L 80.2 255.2 L 76.5 258.9" fill="none" stroke="#cfcfcf" stroke-width="1.4"/><rect x="47" y="269.5" width="31" height="6.2" fill="url(#hgrip)"/><rect x="37.3" y="292" width="49.6" height="38" rx="3.5" fill="#2f2f2f" stroke="#5e5e5e" stroke-width="0.9"/><rect x="61.1" y="304.49999999999994" width="2.0" height="13.799999999999999" fill="#dadada"/><rect x="55.2" y="310.4" width="13.799999999999999" height="2.0" fill="#dadada"/><path d="M 62.1 299.79999999999995 L 66.7 304.99999999999994 H 57.5 Z M 62.1 323.0 L 66.7 317.8 H 57.5 Z M 50.5 311.4 L 55.7 306.79999999999995 V 316.0 Z M 73.7 311.4 L 68.5 306.79999999999995 V 316.0 Z" fill="#dadada"/><path d="M 82.1 319.7 V 325.0 H 76.8 Z" fill="#c8c8c8"/><path d="M 82.1 360.96 V 366.26 H 76.8 Z" fill="#c8c8c8"/><path d="M 82.1 402.21999999999997 V 407.52 H 76.8 Z" fill="#c8c8c8"/><path d="M 82.1 443.47999999999996 V 448.78 H 76.8 Z" fill="#c8c8c8"/><path d="M 82.1 484.73999999999995 V 490.03999999999996 H 76.8 Z" fill="#c8c8c8"/><path d="M 82.1 567.26 V 572.56 H 76.8 Z" fill="#c8c8c8"/><path d="M 82.1 608.52 V 613.8199999999999 H 76.8 Z" fill="#c8c8c8"/><path d="M 82.1 649.78 V 655.0799999999999 H 76.8 Z" fill="#c8c8c8"/><path d="M 82.1 691.04 V 696.3399999999999 H 76.8 Z" fill="#c8c8c8"/><path d="M 82.1 732.3 V 737.5999999999999 H 76.8 Z" fill="#c8c8c8"/><path d="M 82.1 773.56 V 778.8599999999999 H 76.8 Z" fill="#c8c8c8"/><path d="M 82.1 814.82 V 820.12 H 76.8 Z" fill="#c8c8c8"/><path d="M 82.1 856.08 V 861.38 H 76.8 Z" fill="#c8c8c8"/><path d="M 82.1 897.34 V 902.64 H 76.8 Z" fill="#c8c8c8"/><path d="M 82.1 938.6 V 943.9 H 76.8 Z" fill="#c8c8c8"/><path d="M 82.1 979.86 V 985.16 H 76.8 Z" fill="#c8c8c8"/><path d="M 82.1 1021.12 V 1026.42 H 76.8 Z" fill="#c8c8c8"/><path d="M 82.1 1062.3799999999999 V 1067.6799999999998 H 76.8 Z" fill="#c8c8c8"/><path d="M 82.1 1103.64 V 1108.94 H 76.8 Z" fill="#c8c8c8"/><path d="M 82.1 1144.8999999999999 V 1150.1999999999998 H 76.8 Z" fill="#c8c8c8"/><path d="M 82.1 1179.46 V 1184.76 H 76.8 Z" fill="#c8c8c8"/><rect x="50.7" y="342.5" width="22.8" height="18.8" fill="none" stroke="#dadada" stroke-width="2.2" stroke-dasharray="4.6 3" stroke-dashoffset="2"/><ellipse cx="63.4" cy="389.8" rx="10.8" ry="7.2" fill="none" stroke="#dadada" stroke-width="1.9"/><ellipse cx="55.6" cy="396" rx="3" ry="2.3" fill="none" stroke="#dadada" stroke-width="1.7"/><path d="M 57 397.5 C 59 400 59 403 56.8 406.8" fill="none" stroke="#dadada" stroke-width="1.7"/><path d="M 62 426 C 54 423 47.5 430 48.5 437 C 49.5 444 56 447 61.5 446" fill="none" stroke="#dadada" stroke-width="1.7" stroke-dasharray="1.6 2.2"/><path d="M 75.5 423.7 L 68 433.5 L 71 436 Z" fill="#dadada"/><path d="M 66.5 434 C 62 434 61.5 439 60 442.5 C 65 443 70.5 441 70 436.5 Z" fill="#dadada"/><path d="M 47 466.5 H 52.5 M 52.3 462 V 482.5 H 70.5 M 56 466.5 H 70.5 V 489.5 M 74 482.5 H 76" fill="none" stroke="#dadada" stroke-width="2.2"/><rect x="50.3" y="507.6" width="24.3" height="18.8" fill="#5c5c5c" stroke="#dadada" stroke-width="1.9"/><path d="M 50.3 507.6 L 74.6 526.4 M 74.6 507.6 L 50.3 526.4" stroke="#dadada" stroke-width="1.6"/><rect x="48.4" y="505.70000000000005" width="3.8" height="3.8" fill="#dadada"/><rect x="72.69999999999999" y="505.70000000000005" width="3.8" height="3.8" fill="#dadada"/><rect x="48.4" y="524.5" width="3.8" height="3.8" fill="#dadada"/><rect x="72.69999999999999" y="524.5" width="3.8" height="3.8" fill="#dadada"/><path d="M 62.8 556.5 L 52.5 566.8 C 50.6 568.7 50.8 570.2 51.6 570.8 C 52.4 571.5 54 571.5 55.8 569.7 L 66.2 559.3" fill="none" stroke="#dadada" stroke-width="1.8" stroke-linejoin="round"/><path d="M 64.5 552 L 69.5 547 C 71.2 545.3 73.4 545.3 74.7 546.6 C 76 548 76 550.2 74.3 551.9 L 69.3 556.9 Z" fill="#dadada"/><path d="M 60.3 551.8 L 69.6 561.1" stroke="#dadada" stroke-width="3.6" stroke-linecap="round"/><path d="M 54.6 609.2 L 71 592.8" stroke="#dadada" stroke-width="8" stroke-linecap="round"/><circle cx="62.60" cy="601.20" r="0.95" fill="#535353"/><circle cx="62.60" cy="604.88" r="0.95" fill="#535353"/><circle cx="62.60" cy="597.52" r="0.95" fill="#535353"/><circle cx="66.28" cy="601.20" r="0.95" fill="#535353"/><circle cx="58.92" cy="601.20" r="0.95" fill="#535353"/><circle cx="58.92" cy="604.88" r="0.95" fill="#535353"/><circle cx="66.28" cy="604.88" r="0.95" fill="#535353"/><circle cx="66.28" cy="597.52" r="0.95" fill="#535353"/><circle cx="58.92" cy="597.52" r="0.95" fill="#535353"/><path d="M 56.3 597.5 L 66.3 607.5 M 59 594.8 L 69 604.8" stroke="#535353" stroke-width="0" /><path d="M 49.8 603.5 C 48.6 596 52.5 588.5 60.5 587.2" fill="none" stroke="#dadada" stroke-width="1.7" stroke-dasharray="1.5 2.2"/><path d="M 49.8 652.3 L 52 645 L 70 628.8 C 71.5 627.5 73 627.6 74.2 629 C 75.3 630.3 75.2 631.8 73.8 633.2 L 56.6 650.2 Z M 52 645 L 56.6 650.2 M 68 631 L 72 635" fill="none" stroke="#dadada" stroke-width="1.8" stroke-linejoin="round"/><circle cx="61.5" cy="674.5" r="5" fill="#dadada"/><rect x="59.5" y="677" width="4" height="7" fill="#dadada"/><path d="M 52 690.5 V 687 Q 52 684 55 684 H 68 Q 71 684 71 687 V 690.5 Z" fill="#dadada"/><rect x="51.6" y="692.2" width="19.8" height="2.3" fill="#dadada"/><path d="M 73.5 712 L 63.5 725.5 L 66.5 728 Z" fill="#dadada"/><path d="M 62.5 726 C 58 726 57 731 55.5 735.5 C 61 736 66.5 733.5 66 728.5 Z" fill="#dadada"/><path d="M 72 722 C 72 727 70 731 66 733.5" fill="none" stroke="#dadada" stroke-width="1.5" stroke-dasharray="1.3 2"/><path d="M 47.3 720.2 L 53.5 714.5 L 54.2 720.6 Z" fill="#dadada"/><path d="M 52.5 718 C 56 715 61 715 64.5 717.5" fill="none" stroke="#dadada" stroke-width="1.5"/><path d="M 50 767 L 64.5 753.8 L 73.5 762.5 L 62.5 773.5 H 56 Z" fill="none" stroke="#dadada" stroke-width="1.8" stroke-linejoin="round"/><path d="M 57.5 759.5 L 64.5 753.8 L 73.5 762.5 L 66.5 769 Z" fill="#dadada"/><rect x="56" y="773.5" width="17.5" height="1.8" fill="#dadada"/><rect x="50.5" y="795.8" width="23.4" height="18.6" fill="url(#gtool)" stroke="#dadada" stroke-width="1.8"/><path d="M 62.4 834.3 C 64 840 71.2 845 71.2 850.5 C 71.2 855.5 67.5 859 62.4 859 C 57.3 859 53.6 855.5 53.6 850.5 C 53.6 845 60.8 840 62.4 834.3 Z" fill="#dadada"/><circle cx="65" cy="884.3" r="8.2" fill="#dadada"/><path d="M 59.5 890 L 50.6 899" stroke="#dadada" stroke-width="2"/><path d="M 75.5 922 L 69 916.8 L 65.5 920.5 L 56.5 924 L 53 937.5 L 66.5 934 L 70 925 Z" fill="none" stroke="#dadada" stroke-width="1.7" stroke-linejoin="round"/><path d="M 69 916.8 L 75.5 922 L 72.5 925.5 L 65.5 920.5 Z" fill="#dadada"/><circle cx="62" cy="929" r="1.7" fill="#dadada"/><path d="M 53.5 937 L 61 930" stroke="#dadada" stroke-width="1.3"/><path d="M 53 937.5 C 48 939 46 936 46.5 933 M 48.5 929.5 C 50 925 52 922.5 55 924.5" fill="none" stroke="#dadada" stroke-width="1.4"/><circle cx="46.3" cy="930.8" r="2" fill="none" stroke="#dadada" stroke-width="1.3"/><circle cx="52.3" cy="922.5" r="2" fill="none" stroke="#dadada" stroke-width="1.3"/><path d="M 52 967 V 960.5 H 72.8 V 967 M 54.5 962.5 V 966 M 70.3 962.5 V 966 M 62.4 960.5 V 980.5 M 56.5 980.5 H 68.3" fill="none" stroke="#dadada" stroke-width="2.3"/><path d="M 56 999.5 L 70 1011.5 L 63.8 1013 L 69.5 1022 L 66.5 1023.6 L 61 1014.5 L 56 1019 Z" fill="#111" stroke="#dadada" stroke-width="1.5" stroke-linejoin="round"/><rect x="50.6" y="1043" width="23.2" height="19" fill="#6a6a6a" stroke="#dadada" stroke-width="1.8"/><path d="M 55.5 1100 C 53 1097 50.5 1094 51.5 1092.5 C 52.5 1091 54.5 1092.5 56 1094.5 V 1086 C 56 1084 59 1084 59 1086 V 1092 V 1083.5 C 59 1081.8 62.3 1081.8 62.3 1083.5 V 1092 V 1084.5 C 62.3 1082.8 65.5 1082.8 65.5 1084.5 V 1092.5 V 1087 C 65.5 1085.3 68.7 1085.3 68.7 1087 V 1097 C 68.7 1103 65 1107 60.5 1106.8 C 58 1106.5 56.5 1102 55.5 1100 Z" fill="#dadada"/><circle cx="59.5" cy="1133.7" r="8.8" fill="none" stroke="#dadada" stroke-width="2"/><path d="M 65.6 1140 L 73.5 1147" stroke="#dadada" stroke-width="2.8"/><path d="M 55 1130 C 56 1128 58 1127 60.5 1127" fill="none" stroke="#dadada" stroke-width="1.2"/><circle cx="52.8" cy="1176.7" r="2.8" fill="#dadada"/><circle cx="62" cy="1176.7" r="2.8" fill="#dadada"/><circle cx="70.8" cy="1176.7" r="2.8" fill="#dadada"/><rect x="44.5" y="1214.5" width="10.5" height="9" fill="#dadada"/><rect x="39.7" y="1209.3" width="9.5" height="9" fill="#000" stroke="#e0e0e0" stroke-width="1"/><path d="M 68 1211.5 H 76.5 V 1221" fill="none" stroke="#dadada" stroke-width="1.6"/><path d="M 66.3 1211.5 L 70 1208 V 1215 Z M 76.5 1223.7 L 73 1220 H 80 Z" fill="#dadada"/><rect x="53.6" y="1247.9" width="30" height="29.5" fill="#ffffff" stroke="#2a2a2a" stroke-width="1"/><rect x="38.8" y="1231.9" width="28.6" height="29.2" fill="#7f68a9" stroke="#f0f0f0" stroke-width="1.6"/><rect x="37.6" y="1230.7" width="31" height="31.6" fill="none" stroke="#2a2a2a" stroke-width="0.8"/><rect x="49.2" y="1297" width="25" height="20" fill="none" stroke="#dadada" stroke-width="1.7"/><circle cx="61.7" cy="1307" r="5.6" fill="none" stroke="#dadada" stroke-width="1.5" stroke-dasharray="1.4 1.7"/><rect x="55" y="1338.6" width="20" height="13" fill="#535353" stroke="#dadada" stroke-width="1.6"/><path d="M 55 1343.5 H 49.2 V 1357.2 H 67.5 V 1351.6" fill="none" stroke="#dadada" stroke-width="1.6"/><rect x="1931" y="147.5" width="68" height="19" fill="#474747"/><path d="M 1973.8 152.5 L 1970.2 156.3 L 1973.8 160 M 1979.8 152.5 L 1976.2 156.3 L 1979.8 160" fill="none" stroke="#d0d0d0" stroke-width="1.5"/><rect x="1931" y="166" width="68" height="1" fill="#3a3a3a"/><rect x="1989.5" y="166" width="4.5" height="1288" fill="#393939"/><rect x="1931" y="273.2" width="59" height="3" fill="#393939"/><rect x="1931" y="339.4" width="59" height="2.4" fill="#393939"/><rect x="1931" y="403.8" width="59" height="2.4" fill="#393939"/><rect x="1945" y="171" width="31.5" height="6.5" fill="url(#hgrip)"/><rect x="1945" y="281" width="31.5" height="6.5" fill="url(#hgrip)"/><rect x="1945" y="346.5" width="31.5" height="6.5" fill="url(#hgrip)"/><rect x="1949.6" y="189.6" width="5.5" height="5.5" fill="none" stroke="#dadada" stroke-width="1.4"/><rect x="1949.6" y="198.6" width="5.5" height="5.5" fill="none" stroke="#dadada" stroke-width="1.4"/><rect x="1948.9" y="207.5" width="7" height="7.5" fill="#dadada"/><path d="M 1962 197.5 C 1967 198 1968.5 204 1967 209 C 1966 212 1964 214 1962 215.5" fill="none" stroke="#dadada" stroke-width="2.2"/><path d="M 1958.5 200.5 L 1961.5 193 L 1966.5 199 Z" fill="#dadada"/><path d="M 1950.2 235.8 L 1972.6 246.6 L 1950.2 257.5 Z" fill="#dadada"/><path d="M 1951.5 310.5 C 1949.5 307 1950 303 1952.5 301.8 C 1956 300.2 1962 300.2 1969.2 299.2 L 1968.5 301.5 C 1962 302 1956.5 302.5 1953.8 303.5 C 1952.5 305 1952.6 307.5 1953.2 309.5 Z" fill="#dadada"/><path d="M 1965.5 300.8 L 1969.2 299.4 C 1968.6 306 1968.4 314 1968.8 320.6 C 1970 321.2 1971.5 321 1972.6 320.5 C 1971.5 322.5 1969 323.6 1966 323.4 C 1966.2 316 1966 308 1965.5 300.8 Z" fill="#dadada"/><path d="M 1966.5 301.5 L 1954.2 321.2" stroke="#dadada" stroke-width="1.5"/><path d="M 1949 322.6 C 1951.5 320.8 1954.5 321 1957.2 321.6 L 1956.8 323 C 1954 322.5 1951.5 322.6 1949 322.6 Z" fill="#dadada" stroke="#dadada" stroke-width="0.8"/><path d="M 1957.6 314.3 H 1967.2" stroke="#dadada" stroke-width="1.4"/><path d="M 1972.6 365 L 1960 379" stroke="#dadada" stroke-width="1.6" stroke-linecap="round"/><path d="M 1959.5 379.5 L 1949.5 389.5" stroke="#dadada" stroke-width="4.6" stroke-linecap="round"/><path d="M 1951.5 369.6 L 1959.8 374.2" stroke="#dadada" stroke-width="2.6" stroke-linecap="round"/><path d="M 1947.5 363.8 L 1950.2 366.4 L 1948.6 368.4 L 1945.6 366.6 C 1945 370 1948 373 1952.5 372.2 C 1955 371.2 1955 367 1952.8 364.8 C 1951 363 1949 363 1947.5 363.8 Z" fill="#dadada"/><path d="M 1963.8 376.4 L 1968.6 378.6" stroke="#dadada" stroke-width="2.2" stroke-linecap="round"/><circle cx="1971" cy="379.8" r="2.7" fill="none" stroke="#dadada" stroke-width="2"/></g><defs><g id="bd"><use href="#scene"/><rect x="489" y="1298" width="300" height="50" fill="#fff" fill-opacity="0.6"/></g><filter id="mshadow" filterUnits="userSpaceOnUse" x="0" y="0" width="1999" height="1454"><feGaussianBlur stdDeviation="9"/></filter></defs><rect x="232.5" y="30" width="494.5" height="1342.5" rx="10" fill="#000" fill-opacity="0.22" filter="url(#mshadow)"/><g clip-path="url(#menuclip)"><use href="#bd" filter="url(#mblur)"/><rect x="0" y="0" width="1999" height="1454" fill="rgb(78,67,71)" fill-opacity="0.647"/></g><path d="M 233.5 35 V 1360.5 Q 233.5 1369.5 242.5 1369.5 H 717 Q 726 1369.5 726 1360.5 V 35" fill="none" stroke="rgba(255,255,255,0.14)" stroke-width="2"/><path d="M 232.0 35 V 1360.5 Q 232.0 1371.0 242.5 1371.0 H 717 Q 727.5 1371.0 727.5 1360.5 V 35" fill="none" stroke="rgba(0,0,0,0.55)" stroke-width="1"/><text x="265.6" y="62.5" font-size="22.9" fill="#ffffff" font-weight="normal" text-anchor="start" stroke="#ffffff" stroke-width="0.5">Undo Free Transform</text><path d="M 679.35 52.25 V 49.80 A 2.45 2.45 0 1 0 676.90 52.25 H 687.30 A 2.45 2.45 0 1 0 684.85 49.80 V 59.90 A 2.45 2.45 0 1 0 687.30 57.45 H 676.90 A 2.45 2.45 0 1 0 679.35 59.90 Z" fill="none" stroke="#ffffff" stroke-width="2.3" stroke-linejoin="round"/><text x="695.5" y="62.5" font-size="22.9" fill="#ffffff" font-weight="normal" text-anchor="start" stroke="#ffffff" stroke-width="0.5">Z</text><text x="265.6" y="92.75" font-size="22.9" fill="rgba(255,238,238,0.36)" font-weight="normal" text-anchor="start" stroke="rgba(255,238,238,0.36)" stroke-width="0.5">Redo</text><path d="M 679.35 82.50 V 80.05 A 2.45 2.45 0 1 0 676.90 82.50 H 687.30 A 2.45 2.45 0 1 0 684.85 80.05 V 90.15 A 2.45 2.45 0 1 0 687.30 87.70 H 676.90 A 2.45 2.45 0 1 0 679.35 90.15 Z" fill="none" stroke="rgba(255,238,238,0.36)" stroke-width="2.3" stroke-linejoin="round"/><path d="M 660.40 77.10 L 668.45 84.65 H 665.20 V 92.20 H 655.60 V 84.65 H 652.35 Z" fill="none" stroke="rgba(255,238,238,0.36)" stroke-width="2.1" stroke-linejoin="miter" stroke-miterlimit="3"/><text x="695.5" y="92.75" font-size="22.9" fill="rgba(255,238,238,0.36)" font-weight="normal" text-anchor="start" stroke="rgba(255,238,238,0.36)" stroke-width="0.5">Z</text><text x="265.6" y="123.0" font-size="22.9" fill="rgba(255,238,238,0.36)" font-weight="normal" text-anchor="start" stroke="rgba(255,238,238,0.36)" stroke-width="0.5">Toggle Last State</text><path d="M 679.35 112.75 V 110.30 A 2.45 2.45 0 1 0 676.90 112.75 H 687.30 A 2.45 2.45 0 1 0 684.85 110.30 V 120.40 A 2.45 2.45 0 1 0 687.30 117.95 H 676.90 A 2.45 2.45 0 1 0 679.35 120.40 Z" fill="none" stroke="rgba(255,238,238,0.36)" stroke-width="2.3" stroke-linejoin="round"/><path d="M 649.70 108.15 H 659.30 L 664.50 122.45 H 668.90 M 662.10 108.15 H 668.90" fill="none" stroke="rgba(255,238,238,0.36)" stroke-width="2.1"/><text x="695.5" y="123.0" font-size="22.9" fill="rgba(255,238,238,0.36)" font-weight="normal" text-anchor="start" stroke="rgba(255,238,238,0.36)" stroke-width="0.5">Z</text><rect x="233.5" y="139.95" width="493.5" height="2.3" fill="rgba(255,255,255,0.26)"/><text x="265.6" y="171.85" font-size="22.9" fill="rgba(255,238,238,0.36)" font-weight="normal" text-anchor="start" stroke="rgba(255,238,238,0.36)" stroke-width="0.5">Fade...</text><path d="M 679.35 161.60 V 159.15 A 2.45 2.45 0 1 0 676.90 161.60 H 687.30 A 2.45 2.45 0 1 0 684.85 159.15 V 169.25 A 2.45 2.45 0 1 0 687.30 166.80 H 676.90 A 2.45 2.45 0 1 0 679.35 169.25 Z" fill="none" stroke="rgba(255,238,238,0.36)" stroke-width="2.3" stroke-linejoin="round"/><path d="M 660.40 156.20 L 668.45 163.75 H 665.20 V 171.30 H 655.60 V 163.75 H 652.35 Z" fill="none" stroke="rgba(255,238,238,0.36)" stroke-width="2.1" stroke-linejoin="miter" stroke-miterlimit="3"/><text x="695.5" y="171.85" font-size="22.9" fill="rgba(255,238,238,0.36)" font-weight="normal" text-anchor="start" stroke="rgba(255,238,238,0.36)" stroke-width="0.5">F</text><rect x="233.5" y="188.80" width="493.5" height="2.3" fill="rgba(255,255,255,0.26)"/><text x="265.6" y="220.7" font-size="22.9" fill="rgba(255,238,238,0.36)" font-weight="normal" text-anchor="start" stroke="rgba(255,238,238,0.36)" stroke-width="0.5">Cut</text><path d="M 679.35 210.45 V 208.00 A 2.45 2.45 0 1 0 676.90 210.45 H 687.30 A 2.45 2.45 0 1 0 684.85 208.00 V 218.10 A 2.45 2.45 0 1 0 687.30 215.65 H 676.90 A 2.45 2.45 0 1 0 679.35 218.10 Z" fill="none" stroke="rgba(255,238,238,0.36)" stroke-width="2.3" stroke-linejoin="round"/><text x="695.5" y="220.7" font-size="22.9" fill="rgba(255,238,238,0.36)" font-weight="normal" text-anchor="start" stroke="rgba(255,238,238,0.36)" stroke-width="0.5">X</text><text x="265.6" y="250.95" font-size="22.9" fill="#ffffff" font-weight="normal" text-anchor="start" stroke="#ffffff" stroke-width="0.5">Copy</text><path d="M 679.35 240.70 V 238.25 A 2.45 2.45 0 1 0 676.90 240.70 H 687.30 A 2.45 2.45 0 1 0 684.85 238.25 V 248.35 A 2.45 2.45 0 1 0 687.30 245.90 H 676.90 A 2.45 2.45 0 1 0 679.35 248.35 Z" fill="none" stroke="#ffffff" stroke-width="2.3" stroke-linejoin="round"/><text x="695.5" y="250.95" font-size="22.9" fill="#ffffff" font-weight="normal" text-anchor="start" stroke="#ffffff" stroke-width="0.5">C</text><text x="265.6" y="281.2" font-size="22.9" fill="rgba(255,238,238,0.36)" font-weight="normal" text-anchor="start" stroke="rgba(255,238,238,0.36)" stroke-width="0.5">Copy Merged</text><path d="M 679.35 270.95 V 268.50 A 2.45 2.45 0 1 0 676.90 270.95 H 687.30 A 2.45 2.45 0 1 0 684.85 268.50 V 278.60 A 2.45 2.45 0 1 0 687.30 276.15 H 676.90 A 2.45 2.45 0 1 0 679.35 278.60 Z" fill="none" stroke="rgba(255,238,238,0.36)" stroke-width="2.3" stroke-linejoin="round"/><path d="M 660.40 265.55 L 668.45 273.10 H 665.20 V 280.65 H 655.60 V 273.10 H 652.35 Z" fill="none" stroke="rgba(255,238,238,0.36)" stroke-width="2.1" stroke-linejoin="miter" stroke-miterlimit="3"/><text x="695.5" y="281.2" font-size="22.9" fill="rgba(255,238,238,0.36)" font-weight="normal" text-anchor="start" stroke="rgba(255,238,238,0.36)" stroke-width="0.5">C</text><text x="265.6" y="311.45" font-size="22.9" fill="rgba(255,238,238,0.36)" font-weight="normal" text-anchor="start" stroke="rgba(255,238,238,0.36)" stroke-width="0.5">Paste</text><path d="M 679.35 301.20 V 298.75 A 2.45 2.45 0 1 0 676.90 301.20 H 687.30 A 2.45 2.45 0 1 0 684.85 298.75 V 308.85 A 2.45 2.45 0 1 0 687.30 306.40 H 676.90 A 2.45 2.45 0 1 0 679.35 308.85 Z" fill="none" stroke="rgba(255,238,238,0.36)" stroke-width="2.3" stroke-linejoin="round"/><text x="695.5" y="311.45" font-size="22.9" fill="rgba(255,238,238,0.36)" font-weight="normal" text-anchor="start" stroke="rgba(255,238,238,0.36)" stroke-width="0.5">V</text><text x="265.6" y="341.7" font-size="22.9" fill="rgba(255,238,238,0.36)" font-weight="normal" text-anchor="start" stroke="rgba(255,238,238,0.36)" stroke-width="0.5">Paste Special</text><path d="M 693.8 326.90 L 707.8 335.20 L 693.8 343.50 Z" fill="rgba(255,238,238,0.36)"/><text x="265.6" y="371.95" font-size="22.9" fill="rgba(255,238,238,0.36)" font-weight="normal" text-anchor="start" stroke="rgba(255,238,238,0.36)" stroke-width="0.5">Clear</text><rect x="233.5" y="388.90" width="493.5" height="2.3" fill="rgba(255,255,255,0.26)"/><text x="265.6" y="420.8" font-size="22.9" fill="#ffffff" font-weight="normal" text-anchor="start" stroke="#ffffff" stroke-width="0.5">Search</text><path d="M 679.35 410.55 V 408.10 A 2.45 2.45 0 1 0 676.90 410.55 H 687.30 A 2.45 2.45 0 1 0 684.85 408.10 V 418.20 A 2.45 2.45 0 1 0 687.30 415.75 H 676.90 A 2.45 2.45 0 1 0 679.35 418.20 Z" fill="none" stroke="#ffffff" stroke-width="2.3" stroke-linejoin="round"/><text x="695.5" y="420.8" font-size="22.9" fill="#ffffff" font-weight="normal" text-anchor="start" stroke="#ffffff" stroke-width="0.5">F</text><text x="265.6" y="451.05" font-size="22.9" fill="#ffffff" font-weight="normal" text-anchor="start" stroke="#ffffff" stroke-width="0.5">Check Spelling...</text><text x="265.6" y="481.3" font-size="22.9" fill="#ffffff" font-weight="normal" text-anchor="start" stroke="#ffffff" stroke-width="0.5">Find and Replace Text...</text><rect x="233.5" y="498.25" width="493.5" height="2.3" fill="rgba(255,255,255,0.26)"/><text x="265.6" y="530.15" font-size="22.9" fill="#ffffff" font-weight="normal" text-anchor="start" stroke="#ffffff" stroke-width="0.5">Fill...</text><path d="M 682.60 514.50 L 690.65 522.05 H 687.40 V 529.60 H 677.80 V 522.05 H 674.55 Z" fill="none" stroke="#ffffff" stroke-width="2.1" stroke-linejoin="miter" stroke-miterlimit="3"/><text x="695" y="530.65" font-size="16.5" fill="#ffffff" font-weight="bold" text-anchor="start" >F5</text><text x="265.6" y="560.4" font-size="22.9" fill="#ffffff" font-weight="normal" text-anchor="start" stroke="#ffffff" stroke-width="0.5">Stroke...</text><text x="265.6" y="590.65" font-size="22.9" fill="rgba(255,238,238,0.36)" font-weight="normal" text-anchor="start" stroke="rgba(255,238,238,0.36)" stroke-width="0.5">Content-Aware Fill...</text><rect x="233.5" y="607.60" width="493.5" height="2.3" fill="rgba(255,255,255,0.26)"/><text x="265.6" y="639.5" font-size="22.9" fill="#ffffff" font-weight="normal" text-anchor="start" stroke="#ffffff" stroke-width="0.5">Content-Aware Scale</text><path d="M 679.35 629.25 V 626.80 A 2.45 2.45 0 1 0 676.90 629.25 H 687.30 A 2.45 2.45 0 1 0 684.85 626.80 V 636.90 A 2.45 2.45 0 1 0 687.30 634.45 H 676.90 A 2.45 2.45 0 1 0 679.35 636.90 Z" fill="none" stroke="#ffffff" stroke-width="2.3" stroke-linejoin="round"/><path d="M 660.40 623.85 L 668.45 631.40 H 665.20 V 638.95 H 655.60 V 631.40 H 652.35 Z" fill="none" stroke="#ffffff" stroke-width="2.1" stroke-linejoin="miter" stroke-miterlimit="3"/><path d="M 625.70 624.65 H 635.30 L 640.50 638.95 H 644.90 M 638.10 624.65 H 644.90" fill="none" stroke="#ffffff" stroke-width="2.1"/><text x="695.5" y="639.5" font-size="22.9" fill="#ffffff" font-weight="normal" text-anchor="start" stroke="#ffffff" stroke-width="0.5">C</text><text x="265.6" y="669.75" font-size="22.9" fill="#ffffff" font-weight="normal" text-anchor="start" stroke="#ffffff" stroke-width="0.5">Puppet Warp</text><text x="265.6" y="700.0" font-size="22.9" fill="#ffffff" font-weight="normal" text-anchor="start" stroke="#ffffff" stroke-width="0.5">Perspective Warp</text><rect x="233.5" y="708.75" width="493.5" height="30.25" fill="url(#hilite)"/><text x="265.6" y="730.25" font-size="22.9" fill="#ffffff" font-weight="normal" text-anchor="start" stroke="#ffffff" stroke-width="0.5">Free Transform</text><path d="M 679.35 720.00 V 717.55 A 2.45 2.45 0 1 0 676.90 720.00 H 687.30 A 2.45 2.45 0 1 0 684.85 717.55 V 727.65 A 2.45 2.45 0 1 0 687.30 725.20 H 676.90 A 2.45 2.45 0 1 0 679.35 727.65 Z" fill="none" stroke="#ffffff" stroke-width="2.3" stroke-linejoin="round"/><text x="695.5" y="730.25" font-size="22.9" fill="#ffffff" font-weight="normal" text-anchor="start" stroke="#ffffff" stroke-width="0.5">T</text><text x="265.6" y="760.5" font-size="22.9" fill="#ffffff" font-weight="normal" text-anchor="start" stroke="#ffffff" stroke-width="0.5">Transform</text><path d="M 693.8 745.70 L 707.8 754.00 L 693.8 762.30 Z" fill="#ffffff"/><text x="265.6" y="790.75" font-size="22.9" fill="rgba(255,238,238,0.36)" font-weight="normal" text-anchor="start" stroke="rgba(255,238,238,0.36)" stroke-width="0.5">Auto-Align Layers...</text><text x="265.6" y="821.0" font-size="22.9" fill="rgba(255,238,238,0.36)" font-weight="normal" text-anchor="start" stroke="rgba(255,238,238,0.36)" stroke-width="0.5">Auto-Blend Layers...</text><rect x="233.5" y="837.95" width="493.5" height="2.3" fill="rgba(255,255,255,0.26)"/><text x="265.6" y="869.85" font-size="22.9" fill="#ffffff" font-weight="normal" text-anchor="start" stroke="#ffffff" stroke-width="0.5">Define Brush Preset...</text><text x="265.6" y="900.1" font-size="22.9" fill="#ffffff" font-weight="normal" text-anchor="start" stroke="#ffffff" stroke-width="0.5">Define Pattern...</text><text x="265.6" y="930.35" font-size="22.9" fill="rgba(255,238,238,0.36)" font-weight="normal" text-anchor="start" stroke="rgba(255,238,238,0.36)" stroke-width="0.5">Define Custom Shape...</text><rect x="233.5" y="947.30" width="493.5" height="2.3" fill="rgba(255,255,255,0.26)"/><text x="265.6" y="979.2" font-size="22.9" fill="#ffffff" font-weight="normal" text-anchor="start" stroke="#ffffff" stroke-width="0.5">Purge</text><path d="M 693.8 964.40 L 707.8 972.70 L 693.8 981.00 Z" fill="#ffffff"/><rect x="233.5" y="996.15" width="493.5" height="2.3" fill="rgba(255,255,255,0.26)"/><text x="265.6" y="1028.05" font-size="22.9" fill="#ffffff" font-weight="normal" text-anchor="start" stroke="#ffffff" stroke-width="0.5">Adobe PDF Presets...</text><text x="265.6" y="1058.3" font-size="22.9" fill="#ffffff" font-weight="normal" text-anchor="start" stroke="#ffffff" stroke-width="0.5">Presets</text><path d="M 693.8 1043.50 L 707.8 1051.80 L 693.8 1060.10 Z" fill="#ffffff"/><text x="265.6" y="1088.55" font-size="22.9" fill="#ffffff" font-weight="normal" text-anchor="start" stroke="#ffffff" stroke-width="0.5">Remote Connections...</text><rect x="233.5" y="1105.50" width="493.5" height="2.3" fill="rgba(255,255,255,0.26)"/><text x="265.6" y="1137.4" font-size="22.9" fill="#ffffff" font-weight="normal" text-anchor="start" stroke="#ffffff" stroke-width="0.5">Color Settings...</text><path d="M 679.35 1127.15 V 1124.70 A 2.45 2.45 0 1 0 676.90 1127.15 H 687.30 A 2.45 2.45 0 1 0 684.85 1124.70 V 1134.80 A 2.45 2.45 0 1 0 687.30 1132.35 H 676.90 A 2.45 2.45 0 1 0 679.35 1134.80 Z" fill="none" stroke="#ffffff" stroke-width="2.3" stroke-linejoin="round"/><path d="M 660.40 1121.75 L 668.45 1129.30 H 665.20 V 1136.85 H 655.60 V 1129.30 H 652.35 Z" fill="none" stroke="#ffffff" stroke-width="2.1" stroke-linejoin="miter" stroke-miterlimit="3"/><text x="695.5" y="1137.4" font-size="22.9" fill="#ffffff" font-weight="normal" text-anchor="start" stroke="#ffffff" stroke-width="0.5">K</text><text x="265.6" y="1167.65" font-size="22.9" fill="#ffffff" font-weight="normal" text-anchor="start" stroke="#ffffff" stroke-width="0.5">Assign Profile...</text><text x="265.6" y="1197.9" font-size="22.9" fill="#ffffff" font-weight="normal" text-anchor="start" stroke="#ffffff" stroke-width="0.5">Convert to Profile...</text><rect x="233.5" y="1214.85" width="493.5" height="2.3" fill="rgba(255,255,255,0.26)"/><text x="265.6" y="1246.75" font-size="22.9" fill="#ffffff" font-weight="normal" text-anchor="start" stroke="#ffffff" stroke-width="0.5">Keyboard Shortcuts...</text><path d="M 679.35 1236.50 V 1234.05 A 2.45 2.45 0 1 0 676.90 1236.50 H 687.30 A 2.45 2.45 0 1 0 684.85 1234.05 V 1244.15 A 2.45 2.45 0 1 0 687.30 1241.70 H 676.90 A 2.45 2.45 0 1 0 679.35 1244.15 Z" fill="none" stroke="#ffffff" stroke-width="2.3" stroke-linejoin="round"/><path d="M 660.40 1231.10 L 668.45 1238.65 H 665.20 V 1246.20 H 655.60 V 1238.65 H 652.35 Z" fill="none" stroke="#ffffff" stroke-width="2.1" stroke-linejoin="miter" stroke-miterlimit="3"/><path d="M 625.70 1231.90 H 635.30 L 640.50 1246.20 H 644.90 M 638.10 1231.90 H 644.90" fill="none" stroke="#ffffff" stroke-width="2.1"/><text x="695.5" y="1246.75" font-size="22.9" fill="#ffffff" font-weight="normal" text-anchor="start" stroke="#ffffff" stroke-width="0.5">K</text><text x="265.6" y="1277.0" font-size="22.9" fill="#ffffff" font-weight="normal" text-anchor="start" stroke="#ffffff" stroke-width="0.5">Menus...</text><path d="M 679.35 1266.75 V 1264.30 A 2.45 2.45 0 1 0 676.90 1266.75 H 687.30 A 2.45 2.45 0 1 0 684.85 1264.30 V 1274.40 A 2.45 2.45 0 1 0 687.30 1271.95 H 676.90 A 2.45 2.45 0 1 0 679.35 1274.40 Z" fill="none" stroke="#ffffff" stroke-width="2.3" stroke-linejoin="round"/><path d="M 660.40 1261.35 L 668.45 1268.90 H 665.20 V 1276.45 H 655.60 V 1268.90 H 652.35 Z" fill="none" stroke="#ffffff" stroke-width="2.1" stroke-linejoin="miter" stroke-miterlimit="3"/><path d="M 625.70 1262.15 H 635.30 L 640.50 1276.45 H 644.90 M 638.10 1262.15 H 644.90" fill="none" stroke="#ffffff" stroke-width="2.1"/><text x="695.5" y="1277.0" font-size="22.9" fill="#ffffff" font-weight="normal" text-anchor="start" stroke="#ffffff" stroke-width="0.5">M</text><text x="265.6" y="1307.25" font-size="22.9" fill="#ffffff" font-weight="normal" text-anchor="start" stroke="#ffffff" stroke-width="0.5">Toolbar...</text><rect x="233.5" y="1324.20" width="493.5" height="2.3" fill="rgba(255,255,255,0.26)"/><text x="265.6" y="1356.1" font-size="22.9" fill="#ffffff" font-weight="normal" text-anchor="start" stroke="#ffffff" stroke-width="0.5">Start Dictation...</text><text x="713" y="1356.6" font-size="20.5" fill="#ffffff" font-weight="normal" text-anchor="end" >fn fn</text></svg>
</body></html>
